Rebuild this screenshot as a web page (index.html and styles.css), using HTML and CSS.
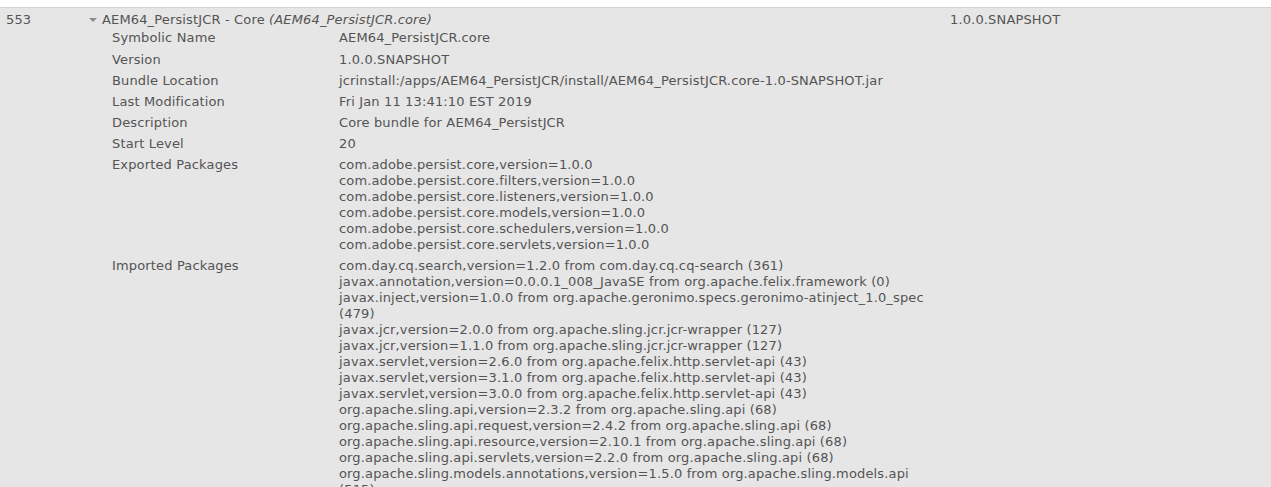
FILE: index.html
```html
<!DOCTYPE html>
<html>
<head>
<meta charset="utf-8">
<link rel="stylesheet" href="styles.css">
</head>
<body>
<div class="page">
  <div class="bundle-row">
    <div class="cell-id">553</div>
    <div class="cell-name">
      <div class="title"><span class="tri"></span>AEM64_PersistJCR - Core <i>(AEM64_PersistJCR.core)</i></div>
      <div class="details">
        <div class="label first">Symbolic Name</div><div class="value first">AEM64_PersistJCR.core</div>
        <div class="label">Version</div><div class="value">1.0.0.SNAPSHOT</div>
        <div class="label">Bundle Location</div><div class="value">jcrinstall:/apps/AEM64_PersistJCR/install/AEM64_PersistJCR.core-1.0-SNAPSHOT.jar</div>
        <div class="label">Last Modification</div><div class="value">Fri Jan 11 13:41:10 EST 2019</div>
        <div class="label">Description</div><div class="value">Core bundle for AEM64_PersistJCR</div>
        <div class="label">Start Level</div><div class="value">20</div>
        <div class="label">Exported Packages</div>
        <div class="value">
          <div>com.adobe.persist.core,version=1.0.0</div>
          <div>com.adobe.persist.core.filters,version=1.0.0</div>
          <div>com.adobe.persist.core.listeners,version=1.0.0</div>
          <div>com.adobe.persist.core.models,version=1.0.0</div>
          <div>com.adobe.persist.core.schedulers,version=1.0.0</div>
          <div>com.adobe.persist.core.servlets,version=1.0.0</div>
        </div>
        <div class="label">Imported Packages</div>
        <div class="value">
          <div>com.day.cq.search,version=1.2.0 from <span class="lnk">com.day.cq.cq-search (361)</span></div>
          <div>javax.annotation,version=0.0.0.1_008_JavaSE from <span class="lnk">org.apache.felix.framework (0)</span></div>
          <div>javax.inject,version=1.0.0 from <span class="lnk">org.apache.geronimo.specs.geronimo-atinject_1.0_spec (479)</span></div>
          <div>javax.jcr,version=2.0.0 from <span class="lnk">org.apache.sling.jcr.jcr-wrapper (127)</span></div>
          <div>javax.jcr,version=1.1.0 from <span class="lnk">org.apache.sling.jcr.jcr-wrapper (127)</span></div>
          <div>javax.servlet,version=2.6.0 from <span class="lnk">org.apache.felix.http.servlet-api (43)</span></div>
          <div>javax.servlet,version=3.1.0 from <span class="lnk">org.apache.felix.http.servlet-api (43)</span></div>
          <div>javax.servlet,version=3.0.0 from <span class="lnk">org.apache.felix.http.servlet-api (43)</span></div>
          <div>org.apache.sling.api,version=2.3.2 from <span class="lnk">org.apache.sling.api (68)</span></div>
          <div>org.apache.sling.api.request,version=2.4.2 from <span class="lnk">org.apache.sling.api (68)</span></div>
          <div>org.apache.sling.api.resource,version=2.10.1 from <span class="lnk">org.apache.sling.api (68)</span></div>
          <div>org.apache.sling.api.servlets,version=2.2.0 from <span class="lnk">org.apache.sling.api (68)</span></div>
          <div>org.apache.sling.models.annotations,version=1.5.0 from <span class="lnk">org.apache.sling.models.api (515)</span></div>
          <div>org.apache.sling.models.factory,version=1.3.0 from <span class="lnk">org.apache.sling.models.api (515)</span></div>
        </div>
      </div>
    </div>
    <div class="cell-version">1.0.0.SNAPSHOT</div>
  </div>
</div>
</body>
</html>
```
FILE: styles.css
```css
html, body {
  margin: 0;
  padding: 0;
  background: #ffffff;
}
body {
  font-family: "DejaVu Sans", Verdana, sans-serif;
  font-size: 13px;
  letter-spacing: 0.15px;
  line-height: 16px;
  color: #545454;
}
.page {
  padding-top: 7px;
}
.bundle-row {
  display: grid;
  grid-template-columns: 83px 861px 1fr;
  background: #e6e6e6;
  border-top: 1px solid #d2d2d2;
  padding-top: 4px;
  min-height: 500px;
}
.cell-id {
  padding-left: 6px;
}
.cell-name {
  padding-left: 6px;
}
.cell-version {
  padding-left: 6px;
}
.tri {
  display: inline-block;
  vertical-align: middle;
  width: 0;
  height: 0;
  border-left: 4px solid transparent;
  border-right: 4px solid transparent;
  border-top: 4px solid #8c8c8c;
  margin-right: 5px;
  margin-top: -2px;
}
.details {
  display: grid;
  grid-template-columns: 227px 1fr;
  margin-left: 23px;
}
.label, .value {
  padding: 2px 0 3px 0;
}
.label.first, .value.first {
  padding-bottom: 4px;
}
.value {
  padding-right: 10px;
}
```
